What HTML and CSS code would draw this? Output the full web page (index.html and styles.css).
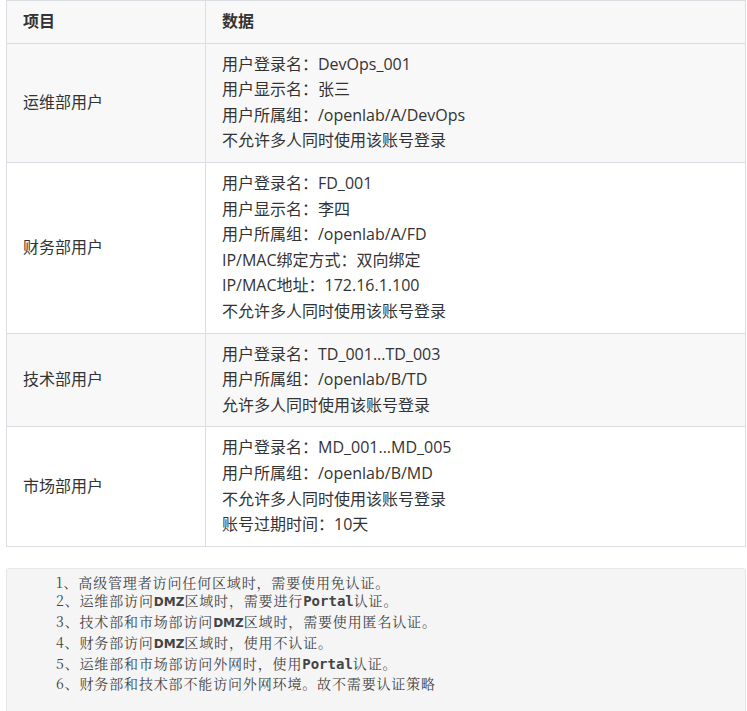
FILE: index.html
```html
<!DOCTYPE html>
<html lang="zh-CN">
<head>
<meta charset="utf-8">
<title>用户策略</title>
<link rel="stylesheet" href="styles.css">
</head>
<body>
<div class="page">
  <table class="users">
    <colgroup><col class="c1"><col class="c2"></colgroup>
    <thead>
      <tr><th>项目</th><th>数据</th></tr>
    </thead>
    <tbody>
      <tr class="alt">
        <td>运维部用户</td>
        <td>用户登录名：DevOps_001<br>用户显示名：张三<br>用户所属组：/openlab/A/DevOps<br>不允许多人同时使用该账号登录</td>
      </tr>
      <tr>
        <td>财务部用户</td>
        <td>用户登录名：FD_001<br>用户显示名：李四<br>用户所属组：/openlab/A/FD<br>IP/MAC绑定方式：双向绑定<br>IP/MAC地址：172.16.1.100<br>不允许多人同时使用该账号登录</td>
      </tr>
      <tr class="alt">
        <td>技术部用户</td>
        <td>用户登录名：TD_001...TD_003<br>用户所属组：/openlab/B/TD<br>允许多人同时使用该账号登录</td>
      </tr>
      <tr>
        <td>市场部用户</td>
        <td>用户登录名：MD_001...MD_005<br>用户所属组：/openlab/B/MD<br>不允许多人同时使用该账号登录<br>账号过期时间：10天</td>
      </tr>
    </tbody>
  </table>
  <div class="notes">
    <p>1、高级管理者访问任何区域时，需要使用免认证。</p>
    <p>2、运维部访问<b class="sans">DMZ</b>区域时，需要进行<b class="mono">Portal</b>认证。</p>
    <p>3、技术部和市场部访问<b class="sans">DMZ</b>区域时，需要使用匿名认证。</p>
    <p>4、财务部访问<b class="sans">DMZ</b>区域时，使用不认证。</p>
    <p>5、运维部和市场部访问外网时，使用<b class="mono">Portal</b>认证。</p>
    <p>6、财务部和技术部不能访问外网环境。故不需要认证策略</p>
  </div>
</div>
</body>
</html>
```
FILE: styles.css
```css
html, body {
  margin: 0;
  padding: 0;
  background: #ffffff;
}
.page {
  padding: 0 1px 0 6px;
  font-family: "Open Sans", "Noto Sans CJK SC", sans-serif;
  color: #333333;
}
.users {
  width: 740px;
  border-collapse: collapse;
  font-size: 16px;
  line-height: 25.6px;
}
.users .c1 { width: 199px; }
.users th, .users td {
  border: 1px solid #dadee2;
  padding: 8px 16px;
  text-align: left;
  vertical-align: middle;
}
.users th {
  font-weight: 700;
  background: #f8f8f8;
}
.users tr.alt td {
  background: #f8f8f8;
}
.notes {
  margin-top: 21px;
  box-sizing: border-box;
  width: 740px;
  height: 160px;
  background: #f5f5f5;
  border: 1px solid #e6e6e6;
  border-radius: 3px;
  padding: 4px 0 0 49px;
  font-family: "Noto Serif CJK SC", "Liberation Serif", "Noto Sans CJK SC", serif;
  font-size: 14px;
  line-height: 18.8px;
  color: #444444;
  letter-spacing: 0.85px;
}
.notes p {
  margin: 0;
}
.notes .sans {
  font-family: "DejaVu Sans", sans-serif;
  font-size: 12px;
  letter-spacing: 0;
}
.notes .mono {
  font-family: "DejaVu Sans Mono", monospace;
  font-size: 14px;
  letter-spacing: 0;
}
```
